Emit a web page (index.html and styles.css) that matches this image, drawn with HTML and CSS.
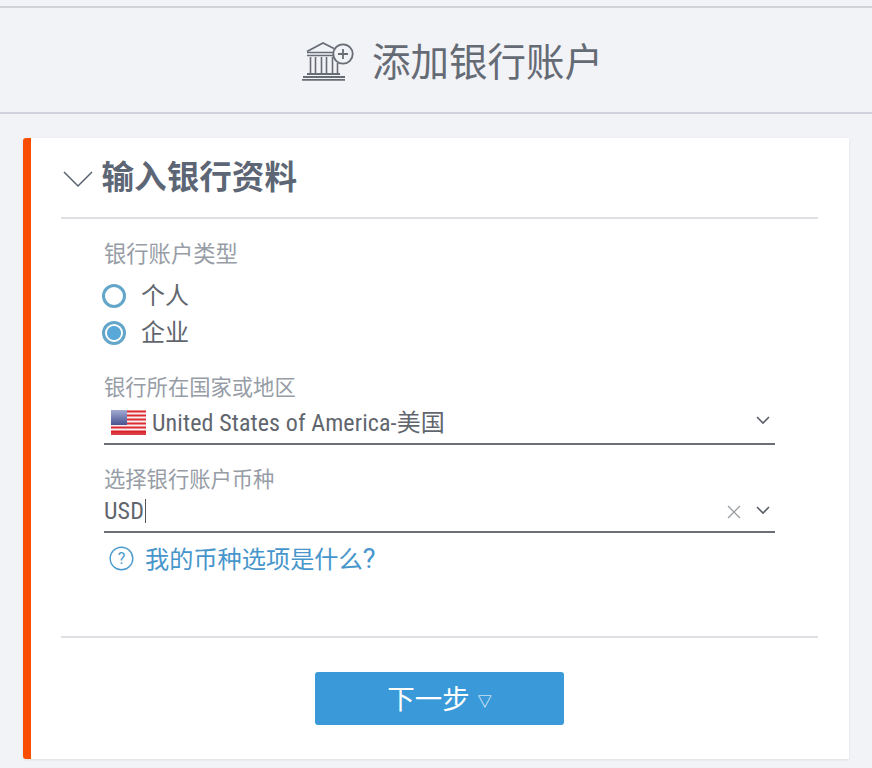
FILE: index.html
```html
<!DOCTYPE html>
<html lang="zh-CN">
<head>
<meta charset="utf-8">
<title>添加银行账户</title>
<link rel="stylesheet" href="styles.css">
</head>
<body>
<header class="page-header">
  <svg class="bank-icon" width="52" height="40" viewBox="0 0 52 40" fill="none" stroke="#686d75">
    <path d="M5 10.500 L21 2 L32 7.500" stroke-width="1.8"/>
    <path d="M5 11.500 H32 M5 14.500 H33" stroke-width="1.6"/>
    <path d="M8.500 16 V32 M13.500 16 V32 M19.500 16 V32 M24.500 16 V32 M30.500 16 V32 M35.500 22 V32" stroke-width="1.6"/>
    <path d="M5 33 H38 M1 36 H43 M0 38.800 H43" stroke-width="1.8"/>
    <circle cx="41" cy="13" r="9.700" fill="#f2f3f7" stroke-width="1.8"/>
    <path d="M41 8 V18 M36 13 H46" stroke-width="1.8"/>
  </svg>
  <h1 class="page-title">添加银行账户</h1>
</header>
<main class="card">
  <div class="section-head">
    <svg class="head-chevron" width="30" height="18" viewBox="0 0 30 18" fill="none" stroke="#5a6270" stroke-width="1.5"><path d="M1 2 L15 16 L29 2"/></svg>
    <h2 class="section-title">输入银行资料</h2>
  </div>
  <form class="form">
    <div class="field-label type-label">银行账户类型</div>
    <div class="radio-row first-radio">
      <span class="radio"></span><span class="radio-text">个人</span>
    </div>
    <div class="radio-row">
      <span class="radio radio-on"></span><span class="radio-text">企业</span>
    </div>
    <div class="field-label country-label">银行所在国家或地区</div>
    <div class="select country-select">
      <svg class="flag" width="35" height="25" viewBox="0 0 35 25">
        <defs>
          <linearGradient id="canton" x1="0" y1="0" x2="0" y2="1">
            <stop offset="0" stop-color="#a3abd3"/>
            <stop offset="1" stop-color="#48528f"/>
          </linearGradient>
        </defs>
        <rect width="35" height="25" fill="#f7eeee"/>
        <path d="M0 1.500H35M0 5.500H35M0 9.500H35M0 13.500H35M0 17.500H35M0 21.500H35" stroke="#dd2b33" stroke-width="2"/>
        <rect y="21" width="35" height="4" fill="#d81f28" opacity="0.85"/>
        <rect width="16" height="15" fill="url(#canton)"/>
      </svg>
      <span class="select-value">United States of America-美国</span>
      <svg class="chevron" width="14" height="9" viewBox="0 0 14 9" fill="none" stroke="#5a5e66" stroke-width="1.6"><path d="M1 1 L7 7 L13 1"/></svg>
    </div>
    <div class="field-label currency-label">选择银行账户币种</div>
    <div class="select currency-select">
      <span class="select-value currency-value">USD</span><span class="caret"></span>
      <span class="spacer"></span>
      <svg class="clear" width="14" height="14" viewBox="0 0 14 14" fill="none" stroke="#9a9da2" stroke-width="1.3"><path d="M1 1 L13 13 M13 1 L1 13"/></svg>
      <svg class="chevron" width="14" height="9" viewBox="0 0 14 9" fill="none" stroke="#5a5e66" stroke-width="1.6"><path d="M1 1 L7 7 L13 1"/></svg>
    </div>
    <a class="help-link">
      <svg class="help-icon" width="25" height="25" viewBox="0 0 25 25" fill="none"><circle cx="12.500" cy="12.500" r="11.300" stroke="#4a9bcc" stroke-width="1.4"/><text x="12.500" y="17.500" text-anchor="middle" class="help-mark">?</text></svg>
      <span class="help-text">我的币种选项是什么<span class="help-q">?</span></span>
    </a>
  </form>
  <div class="actions">
    <button class="next-btn" type="button">下一步<span class="next-mark">▽</span></button>
  </div>
</main>
</body>
</html>
```

FILE: styles.css
```css
html, body {
  margin: 0;
  padding: 0;
}
body {
  width: 872px;
  height: 768px;
  overflow: hidden;
  background: #f2f3f7;
  font-family: Roboto, "Noto Sans CJK SC", sans-serif;
  box-sizing: border-box;
  padding-top: 6px;
}
.page-header {
  height: 104px;
  border-top: 2px solid #cfd1d6;
  border-bottom: 2px solid #cfd2da;
  display: flex;
  align-items: center;
  justify-content: center;
  gap: 18px;
  padding-left: 33px;
}
.bank-icon {
  display: block;
  margin-top: 2px;
}
.page-title {
  margin: 6px 0 0;
  font-size: 38.500px;
  font-weight: 400;
  color: #656b75;
  line-height: 1;
}
.card {
  margin: 24px 23px 0 23px;
  width: 826px;
  height: 621px;
  box-sizing: border-box;
  background: #fff;
  border-left: 8px solid #f94e00;
  border-radius: 3px 0 0 3px;
  box-shadow: 0 1px 3px rgba(0, 0, 0, 0.08);
  padding: 0 31px 0 30px;
  display: flex;
  flex-direction: column;
}
.section-head {
  height: 77px;
  border-bottom: 2px solid #dfe0e3;
  display: flex;
  align-items: center;
  gap: 8.500px;
  padding: 2px 0 0 2px;
}
.head-chevron {
  display: block;
}
.section-title {
  margin: 0;
  font-size: 32.600px;
  line-height: 1;
  font-weight: 700;
  color: #5d6675;
}
.form {
  flex: 1;
  padding: 21px 43px 0 43px;
  border-bottom: 2px solid #dfe0e3;
  display: flex;
  flex-direction: column;
}
.field-label {
  font-size: 21.300px;
  line-height: 28px;
  color: #979da6;
}
.type-label {
  font-size: 22.300px;
  margin-bottom: 9px;
}
.radio-row {
  display: flex;
  align-items: center;
  height: 38px;
  margin-left: -2px;
  gap: 15px;
}
.first-radio {
  height: 37px;
}
.radio {
  width: 24px;
  height: 24px;
  box-sizing: border-box;
  border: 3px solid #63a6c9;
  border-radius: 50%;
  background: #fff;
}
.radio-on {
  background: radial-gradient(circle, #5aa8d8 0, #5aa8d8 6.500px, #fff 7.500px);
}
.radio-text {
  font-size: 24px;
  color: #61666e;
  line-height: 30px;
}
.country-label {
  margin-top: 22px;
}
.select {
  display: flex;
  align-items: center;
  box-sizing: border-box;
  border-bottom: 2px solid #6c6f75;
}
.country-select {
  height: 43px;
  padding-left: 7px;
}
.flag {
  display: block;
  margin-right: 6px;
}
.select-value {
  flex: 1;
  font-size: 24px;
  font-stretch: 87%;
  letter-spacing: 0.110px;
  color: #61666e;
  line-height: 30px;
}
.currency-label {
  margin-top: 21px;
}
.currency-select {
  height: 39px;
  padding-bottom: 3px;
}
.currency-value {
  flex: none;
}
.caret {
  width: 1px;
  height: 24px;
  background: #555;
  margin-left: 1px;
}
.spacer {
  flex: 1;
}
.clear {
  display: block;
  margin-right: 15px;
  margin-top: 2px;
}
.chevron {
  display: block;
  margin-right: 5px;
}
.country-select .chevron {
  margin-top: -4px;
}
.currency-select .chevron {
  margin-top: -2px;
}
.help-link {
  display: flex;
  align-items: center;
  gap: 11px;
  margin-top: 10px;
  padding-left: 5px;
  font-size: 24.200px;
  line-height: 34px;
  color: #4796cb;
}
.help-icon {
  display: block;
  margin-top: -3px;
}
.help-mark {
  font-size: 16px;
  fill: #4a9bcc;
  font-family: Roboto, sans-serif;
}
.help-q {
  font-size: 27px;
  line-height: 1;
}
.actions {
  height: 121px;
  display: flex;
  justify-content: center;
  padding-top: 34px;
  box-sizing: border-box;
}
.next-btn {
  width: 249px;
  height: 53px;
  background: #3a9ad9;
  border: 0;
  border-radius: 3px;
  color: #fff;
  font-family: inherit;
  font-size: 27.500px;
  padding: 0 0 4px 0;
}
.next-mark {
  font-size: 14px;
  margin-left: 8px;
  vertical-align: 3px;
}
```
